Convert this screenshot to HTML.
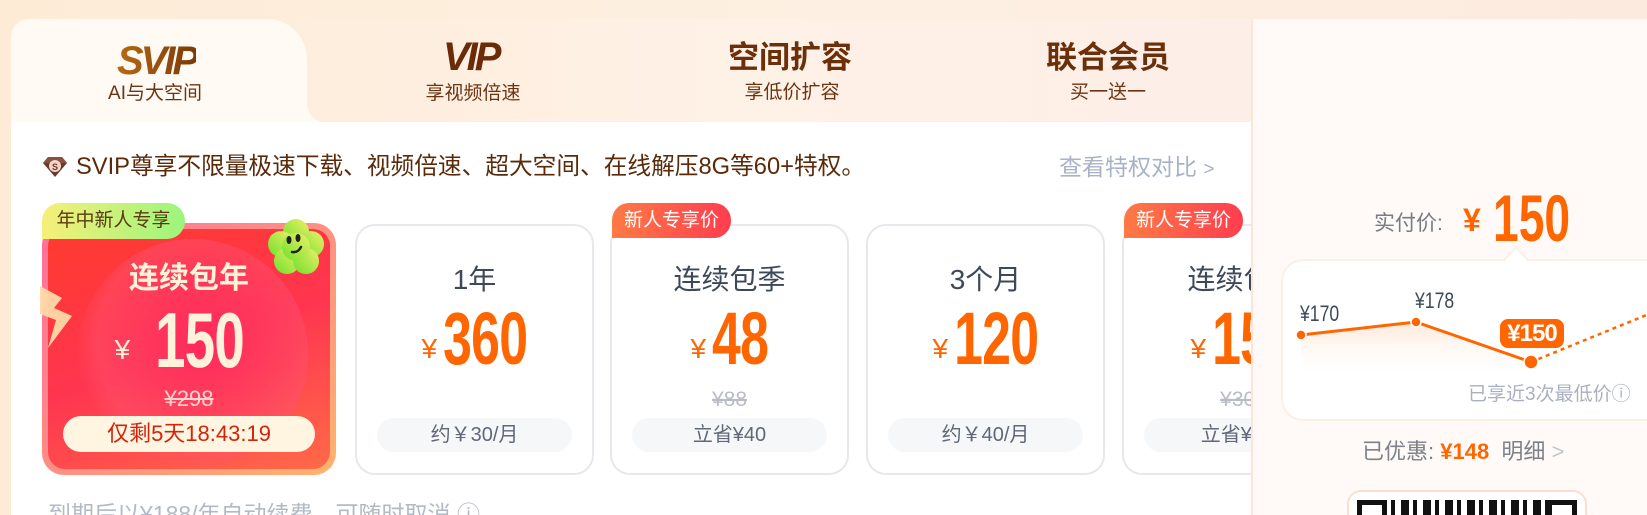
<!DOCTYPE html>
<html style="overflow:hidden;height:515px"><head><meta charset="utf-8"><style>
*{margin:0;padding:0;box-sizing:border-box}
body{width:1647px;height:515px;overflow:hidden;position:relative;font-family:"Liberation Sans","Noto Sans CJK SC",sans-serif;background:linear-gradient(90deg,#fdebd6,#fdf0e2 50%,#fdeadf)}
.abs{position:absolute}
.main{left:11px;top:19px;width:1242px;height:496px;background:#fff;border-radius:18px 0 0 0;overflow:hidden}
.tabs{left:0;top:0;width:1242px;height:103px;background:linear-gradient(90deg,#fdebd7,#fef1e6 60%,#fdeee7)}
.tabact{left:0;top:0;width:296px;height:103px;background:#fffaf4;border-radius:18px 40px 0 0}
.tabact:after{content:"";position:absolute;right:-20px;bottom:0;width:20px;height:20px;background:radial-gradient(circle at 100% 0,transparent 20px,#fffaf4 21px)}
.logo{font-family:"Liberation Sans",sans-serif;font-weight:bold;font-style:italic;font-size:40px;letter-spacing:-3px;line-height:1}
.sub{font-size:19px;color:#6b3413;line-height:1;text-align:center;width:200px}
.big{font-size:31px;font-weight:bold;color:#6b2f0a;text-align:center;width:220px;line-height:1}
.card{border:2px solid #e6e8ee;border-radius:20px;width:239px;height:251px;top:224px;background:#fff;overflow:hidden}
.ct{left:0;width:100%;text-align:center;font-size:28px;color:#3d4859;top:40px;line-height:1}
.pr{left:0;width:100%;text-align:center;top:76px;color:#ff6600;line-height:1;white-space:nowrap}
.pr .y{font-size:28px;vertical-align:6px;margin-right:6px}
.n{display:inline-block;font-weight:bold;font-size:74px;transform:scaleX(.7);letter-spacing:-1px}
.st{left:0;width:100%;text-align:center;top:163px;color:#b9bcc4;font-size:21px;text-decoration:line-through;line-height:1}
.pill{left:20px;right:20px;top:192px;height:34px;border-radius:17px;background:#f6f7f9;color:#5f6778;font-size:20px;text-align:center;line-height:34px}
.tag{height:35px;top:203px;border-radius:17px 17px 17px 0;background:linear-gradient(90deg,#ff7a45,#ff3d4f);color:#fff;font-size:19px;line-height:35px;padding:0 12px;z-index:3}
</style></head><body>
<div class="abs main">
 <div class="abs tabs"></div>
 <div class="abs tabact"></div>
 <div class="abs logo" style="left:106px;top:22px;background:linear-gradient(90deg,#b86a12,#7a3a0a);-webkit-background-clip:text;color:transparent">SVIP</div>
 <div class="abs sub" style="left:44px;top:65px">AI与大空间</div>
 <div class="abs logo" style="left:432px;top:18px;color:#6b2a08">VIP</div>
 <div class="abs sub" style="left:362px;top:65px">享视频倍速</div>
 <div class="abs big" style="left:669px;top:23px">空间扩容</div>
 <div class="abs sub" style="left:681px;top:64px">享低价扩容</div>
 <div class="abs big" style="left:987px;top:23px">联合会员</div>
 <div class="abs sub" style="left:997px;top:64px">买一送一</div>
 <div class="abs" style="left:37px;top:483px;height:13px;width:500px;overflow:hidden"><div style="font-size:23px;color:#b3b9c4;line-height:24px;white-space:nowrap">到期后以¥188/年自动续费，可随时取消 ⓘ</div></div>
</div>
<svg class="abs" style="left:43px;top:156px" width="24" height="22" viewBox="0 0 24 22"><path d="M5 1h14l5 6-12 14L0 7z" fill="#6b3a2a"/><path d="M5 1h14l5 6H0z" fill="#8a5040"/><circle cx="12" cy="10" r="6" fill="#f3d6c8"/><text x="12" y="14" font-size="9" font-weight="bold" text-anchor="middle" fill="#6b3a2a" font-family="Liberation Sans">S</text></svg>
<div class="abs" style="left:76px;top:154px;font-size:23.7px;color:#5a2a0a;line-height:26px">SVIP尊享不限量极速下载、视频倍速、超大空间、在线解压8G等60+特权。</div>
<div class="abs" style="left:1059px;top:154px;font-size:23px;color:#a9b3c5;line-height:26px">查看特权对比 <span style="font-size:19px">&gt;</span></div>
<div class="abs" style="left:42px;top:223px;width:294px;height:252px;border-radius:22px;background:linear-gradient(135deg,#ff6f9a,#ff9c7a 70%,#ffb36d);padding:6px">
 <div style="position:relative;width:100%;height:100%;border-radius:17px;overflow:hidden;background:linear-gradient(160deg,#ff3a2e,#ff3550 50%,#ff6a48)">
  <div class="abs" style="left:30px;top:10px;width:230px;height:230px;border-radius:50%;background:radial-gradient(circle at 55% 45%,#ff2a5a,rgba(255,80,110,.5) 60%,transparent 72%)"></div>
  <div class="abs" style="left:0;width:100%;text-align:center;top:24px;font-size:30px;font-weight:bold;color:#fff2da">连续包年</div>
  <div class="abs" style="left:0;width:100%;text-align:center;top:66px;color:#fff2da;white-space:nowrap"><span style="font-size:28px;vertical-align:8px;margin-right:2px">¥</span><span class="n" style="font-size:78px;margin-left:4px">150</span></div>
  <div class="abs" style="left:0;width:100%;text-align:center;top:157px;font-size:22px;color:#ffd6cf;text-decoration:line-through">¥298</div>
  <div class="abs" style="left:15px;right:15px;top:187px;height:36px;border-radius:18px;background:#fff5e1;color:#d2250c;font-size:22px;text-align:center;line-height:36px">仅剩5天18:43:19</div>
 </div>
</div>
<div class="abs" style="left:42px;top:203px;width:143px;height:36px;border-radius:18px 18px 18px 0;background:linear-gradient(90deg,#f6ef7a,#9cf57c);color:#5a3a10;font-size:19px;line-height:36px;text-align:center">年中新人专享</div>
<svg class="abs" style="left:265px;top:216px" width="62" height="62" viewBox="0 0 62 62"><g fill="url(#fg)"><circle cx="31" cy="16" r="13"/><circle cx="16" cy="28" r="13"/><circle cx="46" cy="28" r="13"/><circle cx="22" cy="45" r="13"/><circle cx="41" cy="45" r="13"/><circle cx="31" cy="31" r="14"/></g><defs><linearGradient id="fg" x1="1" y1="0" x2="0" y2="1"><stop offset="0" stop-color="#eef06a"/><stop offset="1" stop-color="#6ee02a"/></linearGradient></defs><ellipse cx="24" cy="24" rx="2.5" ry="4" fill="#222"/><ellipse cx="33" cy="22" rx="2.5" ry="4" fill="#222"/><path d="M36 31q-3 6-9 5" stroke="#222" stroke-width="2.5" fill="none" stroke-linecap="round"/></svg>
<svg class="abs" style="left:34px;top:282px" width="50" height="70" viewBox="0 0 50 70"><path d="M6 4l22 12-8 10 18 8-24 32 8-28-16-6z" fill="#ffd9a8" opacity=".95"/></svg>
<div class="abs card" style="left:355px"><div class="abs ct">1年</div><div class="abs pr"><span class="y">¥</span><span class="n" style="margin:0 -18px">360</span></div><div class="abs pill">约￥30/月</div></div>
<div class="abs card" style="left:610px"><div class="abs ct">连续包季</div><div class="abs pr"><span class="y">¥</span><span class="n" style="margin:0 -12px">48</span></div><div class="abs st">¥88</div><div class="abs pill">立省¥40</div></div>
<div class="abs tag" style="left:612px">新人专享价</div>
<div class="abs card" style="left:866px"><div class="abs ct">3个月</div><div class="abs pr"><span class="y">¥</span><span class="n" style="margin:0 -18px">120</span></div><div class="abs pill">约￥40/月</div></div>
<div class="abs card" style="left:1122px;width:250px"><div class="abs ct" style="width:239px">连续包年</div><div class="abs pr" style="width:239px"><span class="y">¥</span><span class="n" style="margin:0 -18px">150</span></div><div class="abs st" style="width:239px">¥300</div><div class="abs pill" style="right:auto;width:198px">立省¥150</div></div>
<div class="abs tag" style="left:1124px">新人专享价</div>
<div class="abs" style="left:1251px;top:19px;width:396px;height:496px;background:#fffaf7;border-left:2px solid #fde4d8;z-index:5;overflow:hidden">
 <div class="abs" style="left:121px;top:193px;font-size:21px;color:#777b84;line-height:24px">实付价:</div>
 <div class="abs" style="left:210px;top:183px;font-size:32px;font-weight:bold;color:#ff6600;line-height:36px">¥</div>
 <div class="abs" style="left:240px;top:166px;font-weight:bold;font-size:66px;color:#ff6600;line-height:66px;transform:scaleX(.7);transform-origin:left">150</div>
 <div class="abs" style="left:28px;top:240px;width:366px;height:162px;background:#fff;border:2px solid #fdeee6;border-right:none;border-radius:22px 0 0 22px"></div>
 <div class="abs" style="left:254px;top:231px;width:18px;height:18px;background:#fff;border-left:2px solid #fdeee6;border-top:2px solid #fdeee6;transform:rotate(45deg)"></div>
 <svg class="abs" style="left:30px;top:260px" width="364" height="100" viewBox="0 0 364 100"><defs><linearGradient id="ag" x1="0" y1="0" x2="0" y2="1"><stop offset="0" stop-color="#ffd9c0"/><stop offset="1" stop-color="#fff" stop-opacity="0"/></linearGradient></defs><path d="M18 56L133 43 248 83V100H18z" fill="url(#ag)" opacity=".6"/><path d="M18 56L133 43 248 83" stroke="#ff6600" stroke-width="3" fill="none"/><path d="M248 83L366 35" stroke="#ff6600" stroke-width="2.5" stroke-dasharray="4 4" fill="none"/><circle cx="18" cy="56" r="5" fill="#ff6600" stroke="#fff" stroke-width="1.5"/><circle cx="133" cy="43" r="5" fill="#ff6600" stroke="#fff" stroke-width="1.5"/><circle cx="248" cy="83" r="7" fill="#ff6600" stroke="#fff" stroke-width="1.5"/></svg>
 <div class="abs" style="left:47px;top:282px;font-size:22px;color:#3d4859;transform:scaleX(.8);transform-origin:left">¥170</div>
 <div class="abs" style="left:162px;top:269px;font-size:22px;color:#3d4859;transform:scaleX(.8);transform-origin:left">¥178</div>
 <div class="abs" style="left:247px;top:300px;width:64px;height:29px;border-radius:8px;background:#ff6600;color:#fff;font-weight:bold;font-size:24px;text-align:center;line-height:29px;letter-spacing:-1px">¥150</div>
 <div class="abs" style="left:215px;top:365px;font-size:19px;color:#a9b0c0;line-height:22px">已享近3次最低价ⓘ</div>
 <div class="abs" style="left:109px;top:420px;font-size:22px;color:#7d818a;line-height:26px;white-space:nowrap">已优惠: <b style="color:#ff6600">¥148</b>&nbsp; 明细 <span style="color:#c4c6cc">&gt;</span></div>
 <div class="abs" style="left:94px;top:471px;width:240px;height:25px;border:2px solid #fdddd0;border-bottom:none;border-radius:14px 14px 0 0;background:#fff;padding:8px 8px 0;overflow:hidden">
  <div style="width:220px;height:17px;background:repeating-linear-gradient(90deg,#111 0 8px,#fff 8px 12px,#111 12px 16px,#fff 16px 22px);position:relative"><div class="abs" style="left:0;top:0;width:30px;height:17px;border:5px solid #111;border-bottom:none;background:#fff"></div><div class="abs" style="right:0;top:0;width:30px;height:17px;border:5px solid #111;border-bottom:none;background:#fff"></div></div>
 </div>
</div>
</body></html>
